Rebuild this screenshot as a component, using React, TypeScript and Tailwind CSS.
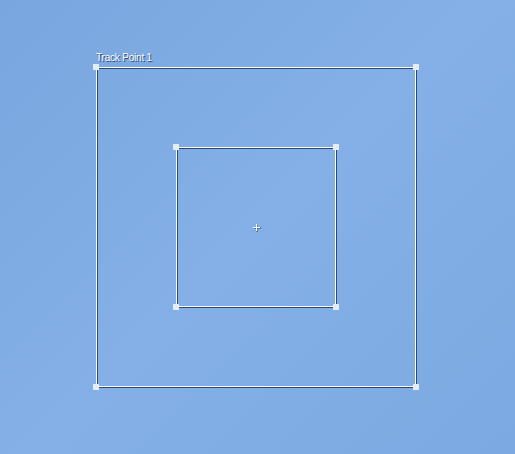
export default function App() {
  const line = "shadow-[1px_1px_0_#2b4a78,inset_1px_1px_0_#2b4a78]"
  const handle = "absolute size-[6px] bg-[#e4ecf8]"

  const Handles = () => (
    <>
      <div className={`${handle} -left-[4px] -top-[4px]`} />
      <div className={`${handle} -right-[4px] -top-[4px]`} />
      <div className={`${handle} -left-[4px] -bottom-[4px]`} />
      <div className={`${handle} -right-[4px] -bottom-[4px]`} />
    </>
  )

  return (
    <div className="h-[454px] w-[515px] overflow-hidden bg-[linear-gradient(135deg,#79a6de_0%,#84b0e7_50%,#7ca9e1_100%)] pl-[96px] pt-[53px] font-['Liberation_Sans',sans-serif]">
      <div className="flex w-[320px] flex-col">
        {/* label */}
        <div className="h-[14px] text-[10px] leading-[10px] tracking-[-0.2px] text-white [text-shadow:1px_1px_0_#2b4a78]">
          Track Point 1
        </div>

        {/* outer search area */}
        <div className={`relative flex h-[320px] w-[320px] items-center justify-center border border-white ${line}`}>
          <Handles />

          {/* inner feature area */}
          <div className={`relative flex h-[160px] w-[160px] items-center justify-center border border-white ${line}`}>
            <Handles />
            <svg width="9" height="9" viewBox="0 0 9 9">
              <path d="M1.5 4.5h7M4.5 1.5v7" stroke="#2b4a78" strokeWidth="1" transform="translate(0.5 0.5)" />
              <path d="M1 4.5h7M4.5 1v7" stroke="#ffffff" strokeWidth="1" />
            </svg>
          </div>
        </div>
      </div>
    </div>
  )
}
